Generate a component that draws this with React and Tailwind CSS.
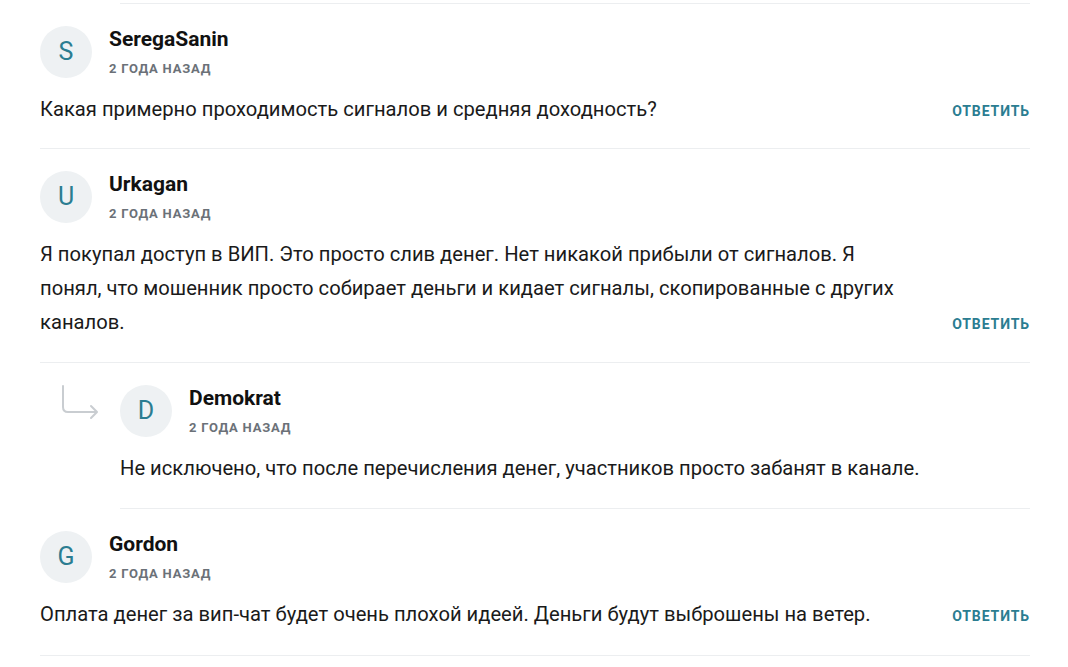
import React from "react";

const comments = [
  { l: "S", name: "SeregaSanin", text: "Какая примерно проходимость сигналов и средняя доходность?", topIndent: true, pb: "pb-[22px]" },
  { l: "U", name: "Urkagan", text: "Я покупал доступ в ВИП. Это просто слив денег. Нет никакой прибыли от сигналов. Я понял, что мошенник просто собирает деньги и кидает сигналы, скопированные с других каналов.", pb: "pb-[23px]" },
  { l: "D", name: "Demokrat", text: "Не исключено, что после перечисления денег, участников просто забанят в канале.", reply: true, pb: "pb-[23px]" },
  { l: "G", name: "Gordon", text: "Оплата денег за вип-чат будет очень плохой идеей. Деньги будут выброшены на ветер.", topIndent: true, pb: "pb-[24px]" },
];

function Avatar({ l }) {
  return (
    <div className="w-[52px] h-[52px] rounded-full bg-[#eef1f3] flex items-center justify-center text-[#2b7d91] text-[25px] shrink-0">
      {l}
    </div>
  );
}

function Arrow() {
  return (
    <svg width="40" height="40" viewBox="0 0 40 40" className="absolute left-[-60px] top-[-2px]">
      <path d="M3 3 V24 Q3 29 8 29 H36 M31 23 L37 29 L31 35" fill="none" stroke="#c9cdd1" strokeWidth="2" strokeLinecap="round" strokeLinejoin="round" />
    </svg>
  );
}

function Comment({ c }) {
  return (
    <div className={`${c.topIndent ? "ml-[80px]" : ""} border-t border-[#eceef0]`}>
      <div className={`${c.topIndent ? "ml-[-80px]" : ""} ${c.reply ? "pl-[80px]" : ""} pt-[22px] ${c.pb}`}>
        <div className="relative flex items-start gap-[17px]">
          {c.reply && <Arrow />}
          <Avatar l={c.l} />
          <div className="flex flex-col">
            <div className="text-[21px] font-bold text-[#111] leading-[26px]">{c.name}</div>
            <div className="text-[13px] font-bold text-[#6b7178] tracking-[0.8px] leading-[16px] mt-[9px]">2 ГОДА НАЗАД</div>
          </div>
        </div>
        <div className="flex items-end mt-[14px]">
          <div className="flex-1 max-w-[870px] text-[20.2px] leading-[34px] text-[#1a1a1a]">{c.text}</div>
          {!c.reply && (
            <div className="ml-auto text-[14px] font-bold text-[#2b7d91] tracking-[0.9px] leading-[30px]">ОТВЕТИТЬ</div>
          )}
        </div>
      </div>
    </div>
  );
}

export default function App() {
  return (
    <div className="w-[1068px] h-[667px] bg-white overflow-hidden" style={{ fontFamily: "Roboto, 'Noto Sans', sans-serif" }}>
      <div className="ml-[40px] w-[990px] pt-[3px]">
        {comments.map((c, i) => (
          <Comment key={i} c={c} />
        ))}
        <div className="border-t border-[#eceef0]" />
      </div>
    </div>
  );
}
